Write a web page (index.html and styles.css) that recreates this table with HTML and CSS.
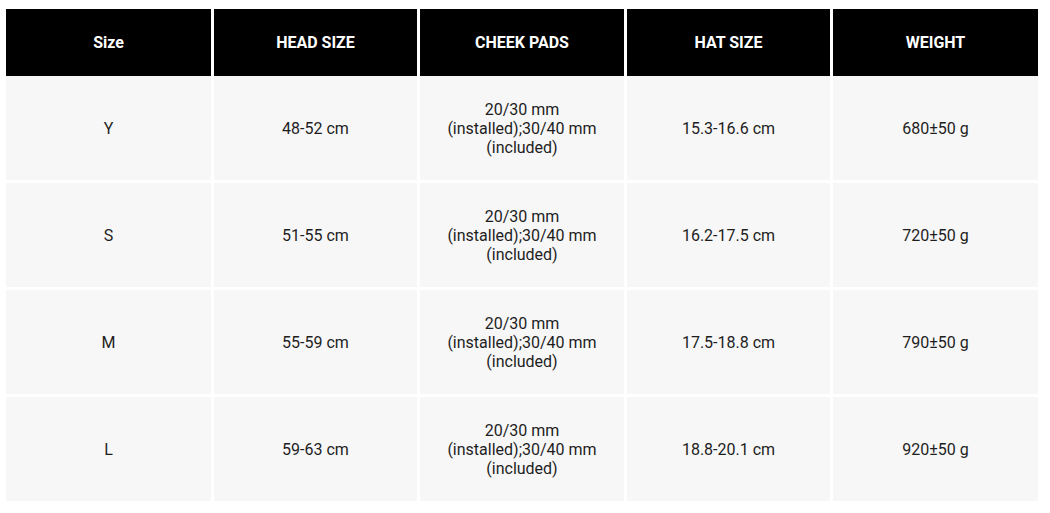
FILE: index.html
```html
<!DOCTYPE html>
<html>
<head>
<meta charset="utf-8">
<link rel="stylesheet" href="styles.css">
</head>
<body>
<div class="table">
  <div class="row head">
    <div class="cell">Size</div>
    <div class="cell">HEAD SIZE</div>
    <div class="cell">CHEEK PADS</div>
    <div class="cell">HAT SIZE</div>
    <div class="cell">WEIGHT</div>
  </div>
  <div class="body">
    <div class="row">
      <div class="cell">Y</div>
      <div class="cell">48-52 cm</div>
      <div class="cell">20/30 mm<br>(installed);30/40 mm<br>(included)</div>
      <div class="cell">15.3-16.6 cm</div>
      <div class="cell">680±50 g</div>
    </div>
    <div class="row">
      <div class="cell">S</div>
      <div class="cell">51-55 cm</div>
      <div class="cell">20/30 mm<br>(installed);30/40 mm<br>(included)</div>
      <div class="cell">16.2-17.5 cm</div>
      <div class="cell">720±50 g</div>
    </div>
    <div class="row">
      <div class="cell">M</div>
      <div class="cell">55-59 cm</div>
      <div class="cell">20/30 mm<br>(installed);30/40 mm<br>(included)</div>
      <div class="cell">17.5-18.8 cm</div>
      <div class="cell">790±50 g</div>
    </div>
    <div class="row">
      <div class="cell">L</div>
      <div class="cell">59-63 cm</div>
      <div class="cell">20/30 mm<br>(installed);30/40 mm<br>(included)</div>
      <div class="cell">18.8-20.1 cm</div>
      <div class="cell">920±50 g</div>
    </div>
  </div>
</div>
</body>
</html>
```
FILE: styles.css
```css
html, body {
  margin: 0;
  padding: 0;
  background: #ffffff;
}
body {
  font-family: Roboto, "Liberation Sans", sans-serif;
  font-size: 16px;
  line-height: 19px;
  color: #1e1e1e;
}
.table {
  margin: 9px 0 0 6px;
  width: 1032px;
  display: flex;
  flex-direction: column;
  gap: 0;
}
.body {
  display: flex;
  flex-direction: column;
  gap: 3px;
}
.row {
  display: grid;
  grid-template-columns: 205px 203px 204px 203px 205px;
  column-gap: 3px;
  height: 104px;
}
.row.head {
  height: 67px;
}
.cell {
  display: flex;
  align-items: center;
  justify-content: center;
  text-align: center;
  background: #f7f7f7;
}
.head .cell {
  background: #000000;
  color: #ffffff;
  font-weight: 700;
}
```
